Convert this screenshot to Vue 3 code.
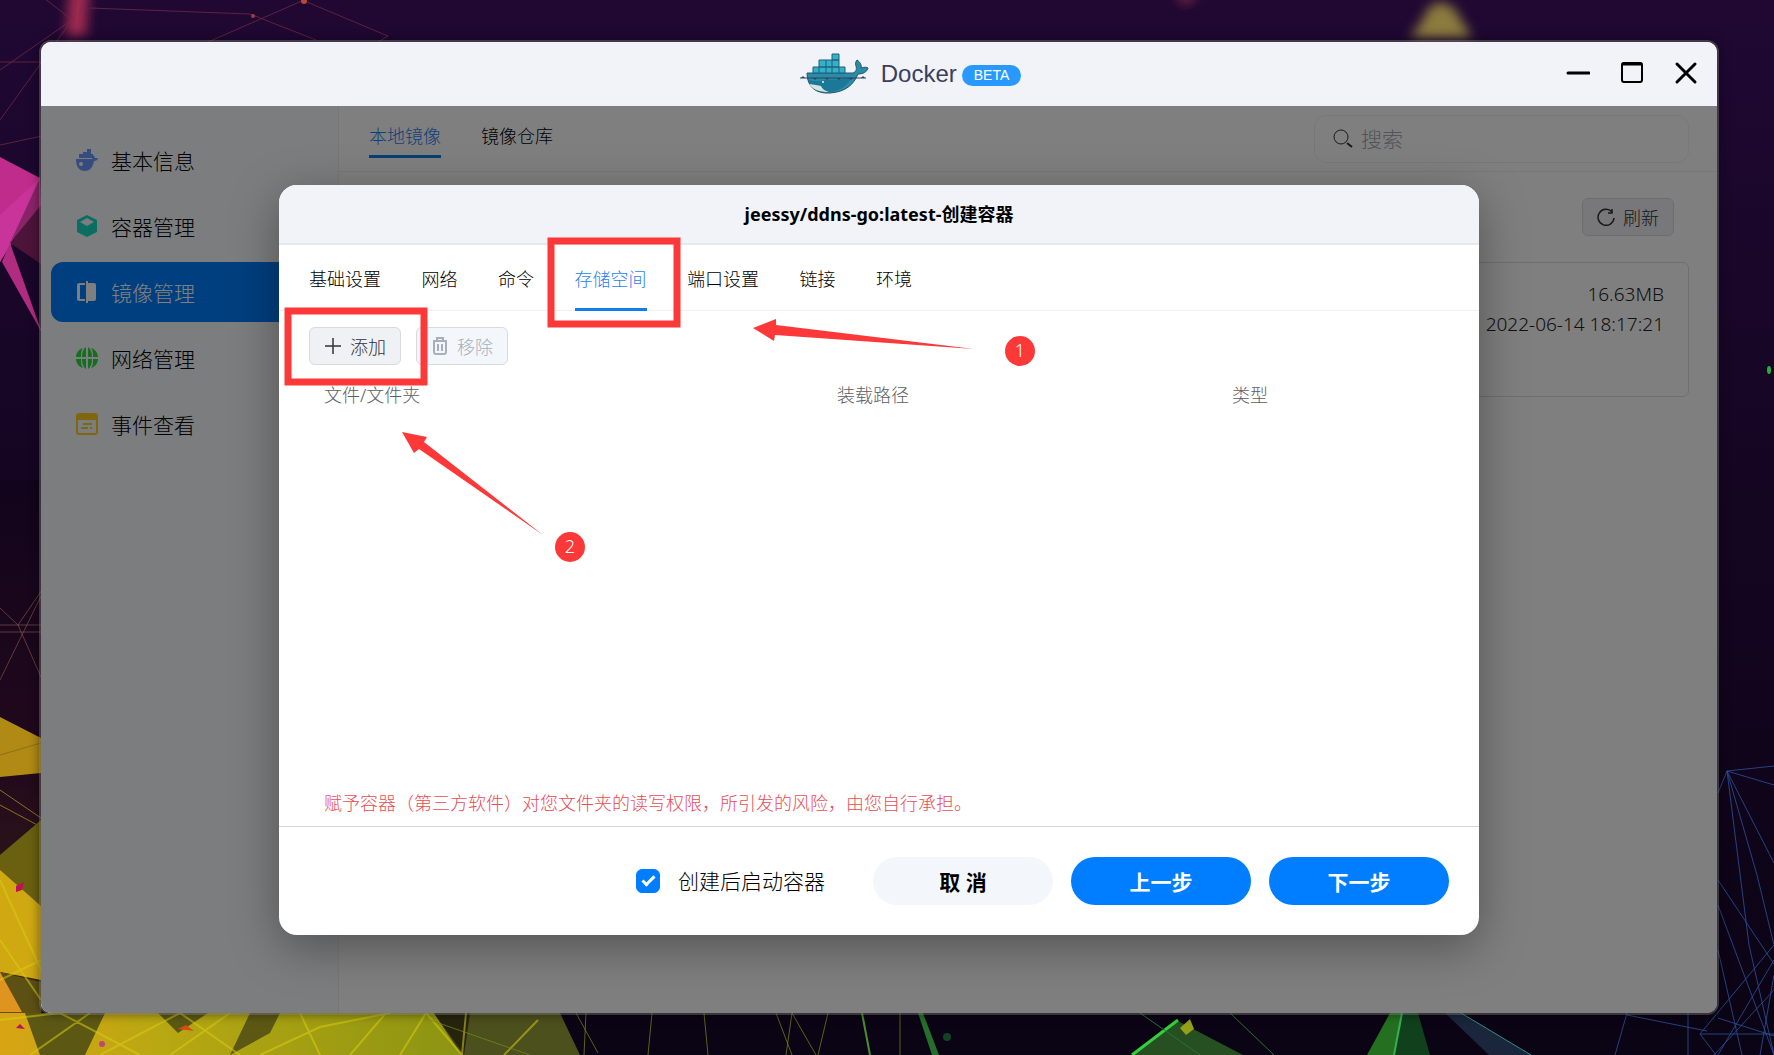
<template>
  <div class="desktop">
    <svg class="wallpaper" viewBox="0 0 1774 1055" preserveAspectRatio="xMidYMid slice" aria-hidden="true">
      <defs>
        <linearGradient id="sky" x1="0" y1="0" x2="0" y2="1">
          <stop offset="0" stop-color="#200833" />
          <stop offset="0.45" stop-color="#150522" />
          <stop offset="1" stop-color="#0b0414" />
        </linearGradient>
        <linearGradient id="gold" x1="0" y1="0" x2="1" y2="0">
          <stop offset="0" stop-color="#d8a414" />
          <stop offset="0.35" stop-color="#b8a812" />
          <stop offset="1" stop-color="#8c9412" />
        </linearGradient>
        <linearGradient id="earth" x1="0" y1="0" x2="0" y2="1">
          <stop offset="0" stop-color="#12041c" />
          <stop offset="0.5" stop-color="#22091c" />
          <stop offset="1" stop-color="#3a2c10" />
        </linearGradient>
        <filter id="soft" x="-50%" y="-50%" width="200%" height="200%">
          <feGaussianBlur stdDeviation="6" />
        </filter>
      </defs>
      <rect width="1774" height="1055" fill="url(#sky)" />
      <rect y="480" width="42" height="575" fill="url(#earth)" />
      <path d="M70 -20h20l-4 56H66z" fill="#a02a50" filter="url(#soft)" />
      <path d="M1430 6l12-4 12 6 18 30h-62l10-14z" fill="#8c7c3c" filter="url(#soft)" />
      <path d="M1172 -8h28l-14 14z" fill="#7a2840" filter="url(#soft)" />
      <g fill="none" stroke="#7a2c46" stroke-width="1" opacity="0.7">
        <path d="M44 -2l28 22L0 70M90 8l160 6 66 26M304 0L208 42M302 0l86 36-10 6M0 62h42M0 145l42-9M0 120L72 20" />
      </g>
      <circle cx="304" cy="1" r="3" fill="#b84838" />
      <circle cx="253" cy="16" r="2" fill="#9a3c4a" />
      <path d="M0 157l40 21v26L10 243 0 262z" fill="#c02c8c" />
      <path d="M0 215l40-37-28 65-12 19z" fill="#c8349a" />
      <path d="M41 204v60L10 243z" fill="#4c1438" />
      <path d="M40 178l1 27-31 38z" fill="#8a2468" />
      <path d="M10 243l32 90-40-71z" fill="#b02c80" />
      <g fill="none" stroke="#8c5c50" stroke-width="1" opacity="0.6">
        <path d="M0 608l18 17 23 52M0 625h42M0 632h42M18 625L42 590M0 680l42-86" />
      </g>
      <path d="M0 717l41 21v35l-41 4z" fill="#b08a14" />
      <path d="M0 755l41-12M0 790l41 28M0 805l41 22" stroke="#8c7020" />
      <path d="M0 855l41-35v86L0 872z" fill="#6a6010" />
      <path d="M0 870l41 36v74L0 972z" fill="#cfa812" />
      <path d="M0 972l41 10v73H0z" fill="#5c5014" />
      <path d="M0 972l22 40H0z" fill="#e09420" />
      <path d="M0 1013h434l28 42H0z" fill="url(#gold)" />
      <path d="M25 1013h80l-20 42H40zM250 1013h30l-10 20-40 22zM158 1013h50l-30 20z" fill="#5c5814" />
      <path d="M434 1013h126l20 42H462z" fill="#4c501c" />
      <path d="M434 1013h36l-6 42z" fill="#26240e" />
      <g fill="none" stroke="#d8cc14" stroke-width="2" opacity="0.55">
        <path d="M0 1020l60-7 80 42M30 1055l60-42M100 1055l80-42 60 42M170 1055l60-42M260 1055l60-28 70-14M300 1013l20 42M350 1055l36-42M400 1055l26-42 36 42M466 1013l-4 42M0 880l41 90M0 980l41-20M538 1020l-34 35M0 940l41 60" />
      </g>
      <g fill="none" stroke="#7c8a1c" stroke-width="1" opacity="0.7">
        <path d="M576 1013l22 40M586 1013l-2 42M652 1013l-4 42M792 1013l-6 42M792 1013l24 42M776 1013l16 42M828 1013l-10 42M704 1013l4 42M900 1013v42M430 1020l100 35" />
      </g>
      <path d="M862 1013l8 42" stroke="#48902c" stroke-width="2" />
      <path d="M918 1013h5l16 42h-7z" fill="#266e2c" />
      <circle cx="947" cy="1037" r="4" fill="#124424" />
      <path d="M1176 1020l67 35h-111z" fill="#265022" />
      <path d="M1178 1020l-46 35" stroke="#34d03c" stroke-width="3" />
      <path d="M1180 1028l10-9 4 10-8 6z" fill="#94a018" />
      <path d="M1230 1013l44 42M1140 1013l60 42" stroke="#2c7034" />
      <path d="M1390 1013h12l-8 42h-27z" fill="#257020" />
      <path d="M1402 1013h16l12 42h-36z" fill="#10401c" />
      <path d="M1402 1013l-8 42" stroke="#34b054" stroke-width="2" />
      <path d="M1445 1013h16l70 42h-42z" fill="#1a263c" />
      <path d="M1461 1013l70 42" stroke="#2c8c80" />
      <g fill="none" stroke="#2c4c94" stroke-width="1" opacity="0.85">
        <path d="M1774 766l-47 5-9 22M1727 771l47 14M1727 771l47 92M1727 771l22 174 25 110M1727 771l30 104 17 70M1718 880l56 84M1718 905l56 150M1718 950l24 105M1774 945l-74 89 16 21M1774 960l-56 95M1718 1018l56 18M1700 1034h74M1627 1013l-12 42M1688 1013v42M1627 1015l80 16M1774 990l-60 65M1760 1055l14-80" />
      </g>
      <ellipse cx="1769" cy="370" rx="2" ry="4" fill="#24b03c" />
      <path d="M16 886l8-4-2 8-6 2zM16 1028l4-4 5 5z" fill="#c01058" />
      <path d="M178 1029l8-4 8 6z" fill="#d84c14" />
      <circle cx="102" cy="1044" r="3" fill="#c04878" />
    </svg>

    <main class="window">
      <header class="title-bar">
        <div class="brand">
          <svg class="brand-logo" viewBox="0 0 70 42" aria-hidden="true">
            <path d="M8 20h46c3-1 4-4 3-7-1-3 0-5 1-6 3 2 5 5 4 8 3-1 6-1 7 0-1 4-5 6-10 6-4 10-12 18-28 19C17 41 8 34 8 20z" fill="#2a8ca8" stroke="#24566c" />
            <path d="M9 26c3 3 12 2 18 1 10-1 18 0 26-3-5 9-12 14-22 15-12 0-20-5-22-13z" fill="#1b7898" />
            <path d="M10 31c5 1 9 1 12 2 1 3 4 5 8 6-9 0-16-2-20-8z" fill="#d6e4dc" />
            <path d="M14 14h32v6H14zM20 7h20v7H20zM33 1h7v6h-7z" fill="#32b0cc" stroke="#1e6078" />
            <path d="M20 14v6M27 7v13M33 7v13M40 14v6" stroke="#1e6078" />
            <path d="M1 25h66" stroke="#2c4458" />
            <path d="M2 25l2-2 2 2zM14 25l2 2 2-2zM26 25l2 2 2-2zM38 25l2 2 2-2zM50 25l2 2 2-2zM62 25l2-2 2 2z" fill="#2c4458" />
            <circle cx="24" cy="29" r="1" fill="#e8f4f8" />
          </svg>
          <h1 class="brand-name">Docker</h1>
          <span class="brand-tag">BETA</span>
        </div>
        <div class="window-actions">
          <button type="button" aria-label="最小化">
            <svg viewBox="0 0 24 24"><path d="M2 12h21" stroke-width="3" /></svg>
          </button>
          <button type="button" aria-label="最大化">
            <svg viewBox="0 0 24 24"><rect x="2" y="2" width="20" height="19" rx="2" stroke-width="2" /><path d="M3 3h18" stroke-width="3" /></svg>
          </button>
          <button type="button" aria-label="关闭">
            <svg viewBox="0 0 24 24"><path d="M3 3l18 18M21 3L3 21" stroke-width="3" /></svg>
          </button>
        </div>
      </header>

      <div class="window-body">
        <nav class="sidebar">
          <button
            v-for="item in menus"
            :key="item.id"
            type="button"
            class="menu-item"
            :class="[item.id, { active: item.id === activeMenu }]"
            @click="activeMenu = item.id"
          >
            <svg class="menu-icon" viewBox="0 0 22 22" aria-hidden="true">
              <path v-for="d in item.paths" :key="d" :d="d" fill="currentColor" fill-rule="evenodd" />
            </svg>
            <span>{{ item.label }}</span>
          </button>
        </nav>

        <section class="content">
          <div class="content-top">
            <div class="page-tabs">
              <button type="button" class="page-tab active">本地镜像</button>
              <button type="button" class="page-tab">镜像仓库</button>
            </div>
            <label class="search-box">
              <svg viewBox="0 0 20 20" aria-hidden="true">
                <circle cx="8" cy="8" r="7" fill="none" stroke="#333" />
                <path d="M14 14l5 4" stroke="#333" stroke-width="2" />
              </svg>
              <input type="search" placeholder="搜索" aria-label="搜索" />
            </label>
          </div>
          <div class="content-tools">
            <button type="button" class="tool-button">
              <svg viewBox="0 0 18 18" aria-hidden="true">
                <path d="M15 4A8 8 0 1 0 17 10M15 1v4h-4" fill="none" stroke="currentColor" stroke-width="1.5" />
              </svg>
              刷新
            </button>
          </div>
          <article class="image-card">
            <p>16.63MB</p>
            <p>2022-06-14 18:17:21</p>
          </article>
        </section>

        <div class="modal-mask">
          <div class="modal-box" role="dialog" aria-labelledby="modal-title">
            <h2 id="modal-title" class="modal-title">jeessy/ddns-go:latest-创建容器</h2>

            <div class="modal-tabs">
              <div class="modal-tab-list">
                <button
                  v-for="tab in tabs"
                  :key="tab"
                  type="button"
                  class="modal-tab"
                  :class="{ active: tab === activeTab }"
                  @click="activeTab = tab"
                >
                  {{ tab }}
                </button>
              </div>
            </div>

            <div class="modal-body">
              <div class="toolbar">
                <button type="button" class="tool-button">
                  <svg viewBox="0 0 18 18" aria-hidden="true">
                    <path d="M1 9h16M9 1v16" stroke="currentColor" stroke-width="1.5" />
                  </svg>
                  添加
                </button>
                <button type="button" class="tool-button" disabled>
                  <svg viewBox="0 0 18 18" aria-hidden="true">
                    <path d="M2 4h14M6 4V1h6v3M3 4v11q0 2 2 2h8q2 0 2-2V4M7 7v7M11 7v7" fill="none" stroke="currentColor" stroke-width="2" />
                  </svg>
                  移除
                </button>
              </div>

              <table class="volume-table">
                <thead>
                  <tr>
                    <th class="col-file">文件/文件夹</th>
                    <th class="col-path">装载路径</th>
                    <th>类型</th>
                  </tr>
                </thead>
              </table>

              <p class="risk-tip">赋予容器（第三方软件）对您文件夹的读写权限，所引发的风险，由您自行承担。</p>
            </div>

            <footer class="modal-footer">
              <label class="auto-start">
                <input v-model="autoStart" type="checkbox" />
                <span>创建后启动容器</span>
              </label>
              <div class="footer-buttons">
                <button type="button" class="footer-button">取 消</button>
                <button type="button" class="footer-button primary">上一步</button>
                <button type="button" class="footer-button primary">下一步</button>
              </div>
            </footer>

            <!-- 操作步骤标注 -->
            <svg class="guide" viewBox="0 0 1200 750" aria-hidden="true">
              <g fill="none" stroke="#fc3838" stroke-width="7">
                <rect x="272" y="56" width="126" height="83" />
                <rect x="9" y="126" width="136" height="71" />
              </g>
              <g fill="#fc3838">
                <path d="M474 143l23-9v6l198 24-199-14-1 6z" />
                <path d="M123 247l25 5-3 5 119 93-124-86-5 4z" />
                <circle cx="741" cy="166" r="15" />
                <circle cx="291" cy="362" r="15" />
              </g>
              <g class="guide-number">
                <text x="741" y="172">1</text>
                <text x="291" y="368">2</text>
              </g>
            </svg>
          </div>
        </div>
      </div>
    </main>
  </div>
</template>

<script setup>
import { ref } from 'vue'

const menus = [
  {
    id: 'info',
    label: '基本信息',
    paths: [
      'M3 9V5h4V3h4V0h4v5h2v4z',
      'M0 10h16c1-1 1-3 1-4 1 1 2 2 2 3h3c0 2-2 3-4 3-1 6-4 10-9 10-6 0-9-4-9-12zM5 13a2 2 0 1 0 0 4 2 2 0 0 0 0-4z'
    ]
  },
  {
    id: 'container',
    label: '容器管理',
    paths: ['M11 0l10 5v12l-10 5-10-5V5zM11 3L4 7l7 4 7-4z']
  },
  {
    id: 'image',
    label: '镜像管理',
    paths: [
      'M3 2h6v2H4v14h5v2H3q-2 0-2-2V4q0-2 2-2z',
      'M10 0h2v2h6q2 0 2 2v14q0 2-2 2h-6v2h-2z'
    ]
  },
  {
    id: 'network',
    label: '网络管理',
    paths: [
      'M10 0v10H6C6 6 7 2 10 0zM12 0c3 2 4 6 4 10h-4zM6 12h4v10c-3-2-4-6-4-10zM12 12h4c0 4-1 8-4 10z',
      'M7 1C5 3 5 7 5 10H0C0 6 3 2 7 1zM15 1c4 1 7 5 7 9h-5c0-3 0-7-2-9zM0 12h5c0 4 0 7 2 9-4-1-7-5-7-9zM17 12h5c0 4-3 8-7 9 2-2 2-5 2-9z'
    ]
  },
  {
    id: 'event',
    label: '事件查看',
    paths: ['M3 0h16q3 0 3 3v16q0 3-3 3H3q-3 0-3-3V3q0-3 3-3zM2 7v12q0 1 1 1h16q1 0 1-1V7zM7 10h9v2H7zM5 14h7v2H5zM14 14h2v2h-2z']
  }
]

const tabs = ['基础设置', '网络', '命令', '存储空间', '端口设置', '链接', '环境']

const activeMenu = ref('image')
const activeTab = ref('存储空间')
const autoStart = ref(true)
</script>

<style>
body {
  background: #12041f;
}
</style>

<style scoped>
.desktop {
  position: relative;
  display: flex;
  min-height: 100vh;
  padding: 42px 57px 42px 41px;
  box-sizing: border-box;
  overflow: hidden;
  font-family: 'Noto Sans', 'Noto Sans CJK SC', sans-serif;
  font-weight: 300;
  color: #000;
}

.wallpaper {
  position: absolute;
  inset: 0;
  width: 100%;
  height: 100%;
}

button {
  border: none;
  padding: 0;
  background: none;
  font-family: inherit;
  font-weight: inherit;
  color: inherit;
  cursor: pointer;
}

.window {
  position: relative;
  flex: 1;
  display: flex;
  flex-direction: column;
  border-radius: 10px;
  background: #ffffff;
  box-shadow: 0 0 0 2px rgba(150, 150, 150, 0.35), 0 0 12px rgba(0, 0, 0, 0.6);
}

/* 标题栏 */
.title-bar {
  display: flex;
  align-items: center;
  height: 64px;
  padding: 0 19px 0 213px;
  border-radius: 10px 10px 0 0;
  background: #f1f3f8;
}

.brand {
  flex: 1;
  display: flex;
  align-items: center;
  justify-content: center;
}

.brand-logo {
  width: 70px;
  height: 42px;
  margin-right: 12px;
}

.brand-name {
  margin: 0 5px 0 0;
  font-family: 'Liberation Sans', sans-serif;
  font-size: 24px;
  font-weight: 400;
  color: #3a3f5c;
}

.brand-tag {
  padding: 0 12px;
  border-radius: 11px;
  background: #2999ff;
  color: #ffffff;
  font-family: 'Liberation Sans', sans-serif;
  font-size: 14px;
  line-height: 21px;
  margin-top: 2px;
}

.window-actions {
  display: flex;
  gap: 30px;
  padding-bottom: 2px;
}

.window-actions button,
.window-actions svg {
  display: block;
  width: 24px;
  height: 24px;
}

.window-actions svg {
  fill: none;
  stroke: #000;
  stroke-linecap: round;
}

.window-body {
  position: relative;
  flex: 1;
  display: flex;
}

/* 侧边栏 */
.sidebar {
  width: 298px;
  padding: 24px 10px;
  box-sizing: border-box;
  border-right: 1px solid #eceef2;
  border-radius: 0 0 0 10px;
  background: #f8fafc;
  display: flex;
  flex-direction: column;
  gap: 6px;
}

.menu-item {
  display: flex;
  align-items: center;
  gap: 13px;
  height: 60px;
  padding: 0 25px;
  border-radius: 12px;
  font-size: 21px;
}

.menu-item.active {
  background: #007eff;
  color: #ffffff;
}

.menu-icon {
  width: 22px;
  height: 22px;
}

.info .menu-icon {
  color: #6c98ff;
}

.container .menu-icon {
  color: #18dcc4;
}

.network .menu-icon {
  color: #2cdc40;
}

.event .menu-icon {
  color: #ffcc20;
}

/* 内容区 */
.content {
  flex: 1;
}

.content-top {
  display: flex;
  align-items: center;
  justify-content: space-between;
  height: 66px;
  padding: 0 28px 0 30px;
  box-sizing: border-box;
  border-bottom: 1px solid #eceef2;
}

.page-tabs {
  display: flex;
  gap: 40px;
}

.page-tab {
  height: 38px;
  padding-bottom: 4px;
  border-bottom: 3px solid transparent;
  font-size: 18px;
}

.page-tab.active {
  border-color: #0f7ee8;
  color: #1f7ff0;
}

.search-box {
  display: flex;
  align-items: center;
  gap: 8px;
  width: 375px;
  height: 48px;
  padding: 0 18px;
  box-sizing: border-box;
  border: 1px solid #f0f1f4;
  border-radius: 12px;
}

.search-box svg {
  width: 20px;
  height: 20px;
}

.search-box input {
  flex: 1;
  min-width: 0;
  padding: 0;
  border: none;
  outline: none;
  background: none;
  font-family: inherit;
  font-size: 21px;
  font-weight: inherit;
}

.search-box input::placeholder {
  color: #a4a8b2;
}

.content-tools {
  display: flex;
  justify-content: flex-end;
  padding: 26px 43px;
}

.tool-button {
  display: flex;
  align-items: center;
  gap: 8px;
  height: 38px;
  padding: 0 14px;
  box-sizing: border-box;
  border: 1px solid #d8dade;
  border-radius: 6px;
  background: #f0f1f5;
  font-size: 18px;
  color: #303238;
}

.tool-button svg {
  width: 18px;
  height: 18px;
}

.tool-button:disabled {
  background: #f3f7fb;
  color: #a9afba;
}

.image-card {
  margin: 0 28px 0 30px;
  height: 135px;
  padding: 16px 24px;
  box-sizing: border-box;
  border: 1px solid #dcdfe4;
  border-radius: 6px;
  text-align: right;
}

.image-card p {
  margin: 0;
  font-size: 19px;
  line-height: 30px;
  color: #222;
}

/* 弹窗 */
.modal-mask {
  position: absolute;
  inset: 0;
  display: flex;
  align-items: center;
  justify-content: center;
  border-radius: 0 0 10px 10px;
  background: rgba(0, 0, 0, 0.5);
}

.modal-box {
  position: relative;
  display: flex;
  flex-direction: column;
  width: 1200px;
  max-width: 100%;
  min-height: 750px;
  border-radius: 18px;
  background: #ffffff;
  box-shadow: 0 12px 48px rgba(0, 0, 0, 0.35);
}

.modal-title {
  margin: 0;
  border-bottom: 2px solid #e6e8ee;
  border-radius: 18px 18px 0 0;
  background: #f1f3f8;
  font-size: 18px;
  font-weight: 700;
  line-height: 58px;
  text-align: center;
}

.modal-tabs {
  padding: 0 30px;
  border-bottom: 1px solid #eff0f3;
}

.modal-tab-list {
  display: flex;
  justify-content: space-between;
  max-width: 603px;
}

.modal-tab {
  height: 66px;
  margin-bottom: -1px;
  border-top: 3px solid transparent;
  border-bottom: 3px solid transparent;
  font-size: 18px;
}

.modal-tab.active {
  border-bottom-color: #0f7ee8;
  color: #1f7ff0;
}

.modal-body {
  flex: 1;
  display: flex;
  flex-direction: column;
  padding: 16px 30px 8px;
}

.toolbar {
  display: flex;
  gap: 15px;
}

.volume-table {
  width: 100%;
  margin-top: 12px;
  border-collapse: collapse;
  table-layout: fixed;
}

.volume-table th {
  height: 36px;
  padding: 0 15px;
  box-sizing: border-box;
  font-size: 18px;
  font-weight: inherit;
  line-height: 36px;
  text-align: left;
  color: #5c5e64;
}

.volume-table .col-file {
  width: 513px;
}

.volume-table .col-path {
  width: 395px;
}

.risk-tip {
  margin: auto 15px 0;
  font-size: 18px;
  line-height: 30px;
  color: #e84c56;
}

.modal-footer {
  display: flex;
  align-items: center;
  justify-content: flex-end;
  gap: 48px;
  padding: 30px;
  border-top: 1px solid #d4d7da;
}

.auto-start {
  display: flex;
  align-items: center;
  gap: 18px;
  font-size: 21px;
  line-height: 48px;
}

.auto-start input {
  appearance: none;
  position: relative;
  width: 24px;
  height: 24px;
  margin: 0;
  border: 1px solid #007eff;
  border-radius: 6px;
}

.auto-start input:checked {
  background: #007eff;
}

.auto-start input:checked::after {
  content: '';
  position: absolute;
  left: 8px;
  top: 3px;
  width: 4px;
  height: 10px;
  border: solid #ffffff;
  border-width: 0 3px 3px 0;
  transform: rotate(45deg);
}

.footer-buttons {
  display: flex;
  gap: 18px;
}

.footer-button {
  width: 180px;
  height: 48px;
  border-radius: 24px;
  background: #f3f7fb;
  font-size: 21px;
  font-weight: 700;
}

.footer-button.primary {
  background: #007eff;
  color: #ffffff;
}

.guide {
  position: absolute;
  inset: 0;
  width: 100%;
  height: 100%;
  pointer-events: none;
}

.guide-number {
  fill: #ffffff;
  font-size: 18px;
  text-anchor: middle;
}
</style>
